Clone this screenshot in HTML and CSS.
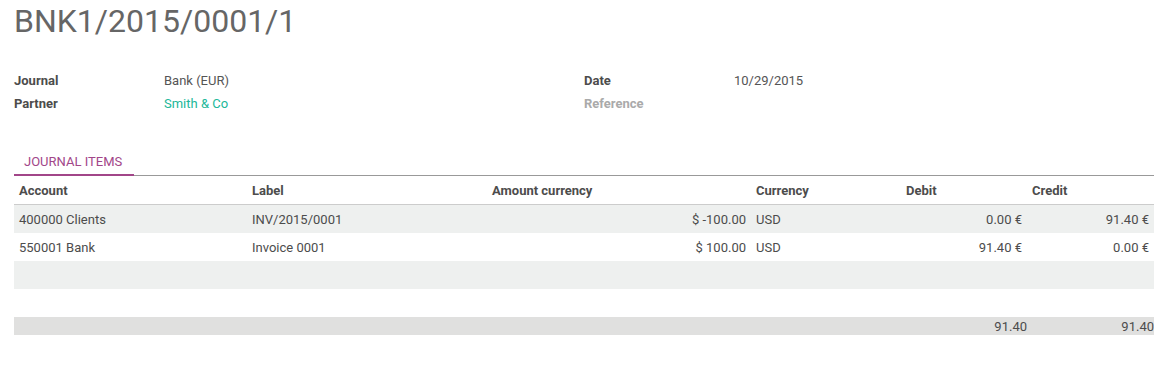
FILE: index.html
```html
<!DOCTYPE html>
<html>
<head>
<meta charset="utf-8">
<link rel="stylesheet" href="styles.css">
</head>
<body>
<div class="sheet">
  <h1 class="title">BNK1/2015/0001/1</h1>
  <div class="fields">
    <div class="group">
      <div class="row"><span class="lbl">Journal</span><span class="val">Bank (EUR)</span></div>
      <div class="row"><span class="lbl">Partner</span><span class="val link">Smith &amp; Co</span></div>
    </div>
    <div class="group">
      <div class="row"><span class="lbl">Date</span><span class="val">10/29/2015</span></div>
      <div class="row"><span class="lbl muted">Reference</span><span class="val"></span></div>
    </div>
  </div>
  <div class="tabs">
    <div class="tab">JOURNAL ITEMS</div>
  </div>
  <table class="grid">
    <colgroup>
      <col class="c-account"><col class="c-label"><col class="c-amount"><col class="c-cur"><col class="c-debit"><col class="c-credit">
    </colgroup>
    <thead>
      <tr><th>Account</th><th>Label</th><th>Amount currency</th><th>Currency</th><th>Debit</th><th>Credit</th></tr>
    </thead>
    <tbody>
      <tr class="odd"><td>400000 Clients</td><td>INV/2015/0001</td><td class="num">$ -100.00</td><td>USD</td><td class="num">0.00 €</td><td class="num">91.40 €</td></tr>
      <tr><td>550001 Bank</td><td>Invoice 0001</td><td class="num">$ 100.00</td><td>USD</td><td class="num">91.40 €</td><td class="num">0.00 €</td></tr>
      <tr class="odd"><td></td><td></td><td></td><td></td><td></td><td></td></tr>
      <tr class="blank"><td></td><td></td><td></td><td></td><td></td><td></td></tr>
    </tbody>
    <tfoot>
      <tr><td></td><td></td><td></td><td></td><td class="num tot">91.40</td><td class="num tot">91.40</td></tr>
    </tfoot>
  </table>
</div>
</body>
</html>
```

FILE: styles.css
```css
html, body {
  margin: 0;
  padding: 0;
  background: #ffffff;
}
body {
  font-family: Roboto, "Liberation Sans", sans-serif;
  font-size: 13px;
  color: #4c4c4c;
}
.sheet {
  padding: 0 9px 0 14px;
}
.title {
  margin: 0;
  font-size: 32px;
  font-weight: 400;
  line-height: 42px;
  color: #666666;
}
.fields {
  display: grid;
  grid-template-columns: 570px 1fr;
  margin-top: 27px;
}
.row {
  display: grid;
  grid-template-columns: 150px 1fr;
  height: 23px;
  align-items: center;
}
.lbl {
  font-weight: 700;
  color: #4c4c4c;
}
.lbl.muted {
  color: #aaaaaa;
}
.val {
  color: #555555;
}
.val.link {
  color: #21b799;
}
.tabs {
  margin-top: 34px;
  border-bottom: 1px solid #999999;
  display: flex;
}
.tab {
  width: 120px;
  box-sizing: border-box;
  padding: 0 10px;
  height: 27px;
  line-height: 25px;
  color: #a24689;
  border-bottom: 2px solid #a24689;
  margin-bottom: -1px;
}
.grid {
  width: 1140px;
  border-collapse: collapse;
  table-layout: fixed;
}
.c-account { width: 233px; }
.c-label { width: 240px; }
.c-amount { width: 264px; }
.c-cur { width: 150px; }
.c-debit { width: 126px; }
.c-credit { width: 127px; }
th {
  text-align: left;
  font-weight: 700;
  color: #4c4c4c;
  height: 28px;
  padding: 0 5px;
  border-bottom: 1px solid #cccccc;
}
td {
  height: 28px;
  padding: 0 5px;
  color: #4c4c4c;
  white-space: nowrap;
}
td.num {
  text-align: right;
}
tr.odd td {
  background: #eef0ef;
}
tr.blank td {
  height: 28px;
}
tfoot td {
  background: #e0e0df;
  height: 18px;
  padding: 0;
}
tfoot td.tot {
  padding-right: 0;
}
```
